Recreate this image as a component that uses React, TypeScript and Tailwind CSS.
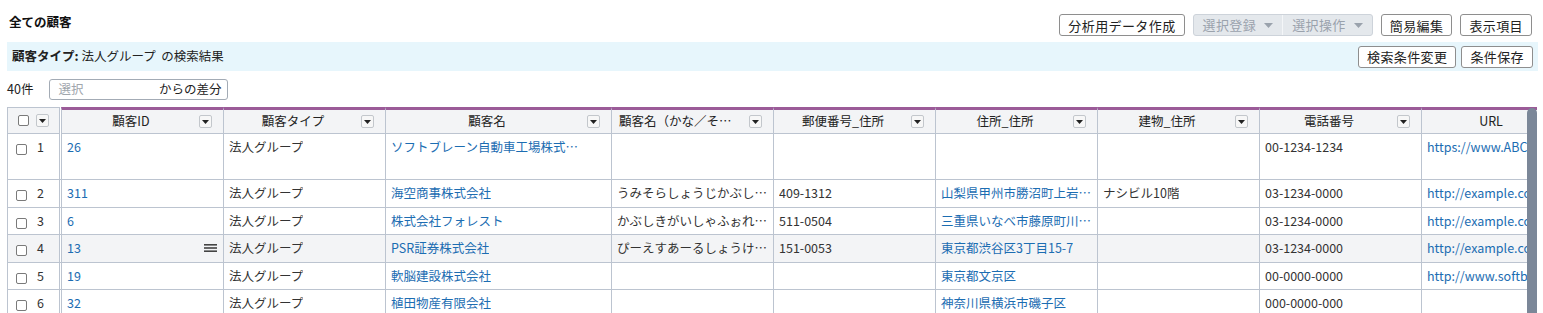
import React from "react";

type Col = {
    key: string;
    label: string;
    width: string;
    link?: boolean;
    extra?: string;
};

type Customer = {
    no: number;
    id: string;
    type: string;
    name: string;
    kana: string;
    zip: string;
    address: string;
    building: string;
    tel: string;
    url: string;
};

const columns: Col[] = [
    { key: "id", label: "顧客ID", width: "w-[162px]", link: true },
    { key: "type", label: "顧客タイプ", width: "w-[162px]" },
    { key: "name", label: "顧客名", width: "w-[226px]", link: true, extra: "pr-[26px]" },
    { key: "kana", label: "顧客名（かな／その他）", width: "w-[162px]" },
    { key: "zip", label: "郵便番号_住所", width: "w-[162px]" },
    { key: "address", label: "住所_住所", width: "w-[162px]", link: true },
    { key: "building", label: "建物_住所", width: "w-[162px]" },
    { key: "tel", label: "電話番号", width: "w-[162px]" },
    { key: "url", label: "URL", width: "w-[162px]", link: true },
];

const customers: Customer[] = [
    {
        no: 1,
        id: "26",
        type: "法人グループ",
        name: "ソフトブレーン自動車工場株式会社 本社営業所",
        kana: "",
        zip: "",
        address: "",
        building: "",
        tel: "00-1234-1234",
        url: "https://www.ABC.co.jp",
    },
    {
        no: 2,
        id: "311",
        type: "法人グループ",
        name: "海空商事株式会社",
        kana: "うみそらしょうじかぶしきがいしゃ",
        zip: "409-1312",
        address: "山梨県甲州市勝沼町上岩崎1234",
        building: "ナシビル10階",
        tel: "03-1234-0000",
        url: "http://example.com",
    },
    {
        no: 3,
        id: "6",
        type: "法人グループ",
        name: "株式会社フォレスト",
        kana: "かぶしきがいしゃふぉれすと",
        zip: "511-0504",
        address: "三重県いなべ市藤原町川合123",
        building: "",
        tel: "03-1234-0000",
        url: "http://example.com",
    },
    {
        no: 4,
        id: "13",
        type: "法人グループ",
        name: "PSR証券株式会社",
        kana: "ぴーえすあーるしょうけんかぶしきがいしゃ",
        zip: "151-0053",
        address: "東京都渋谷区3丁目15-7",
        building: "",
        tel: "03-1234-0000",
        url: "http://example.com",
    },
    {
        no: 5,
        id: "19",
        type: "法人グループ",
        name: "軟脳建設株式会社",
        kana: "",
        zip: "",
        address: "東京都文京区",
        building: "",
        tel: "00-0000-0000",
        url: "http://www.softbrain.co.jp",
    },
    {
        no: 6,
        id: "32",
        type: "法人グループ",
        name: "植田物産有限会社",
        kana: "",
        zip: "",
        address: "神奈川県横浜市磯子区",
        building: "",
        tel: "000-0000-000",
        url: "",
    },
    {
        no: 7,
        id: "41",
        type: "法人グループ",
        name: "株式会社サンプル",
        kana: "",
        zip: "",
        address: "",
        building: "",
        tel: "",
        url: "",
    },
];

const Check = () => (
    <span className="inline-block w-[11px] h-[11px] border border-[#7a7a7a] rounded-[2px] bg-white shrink-0" />
);

const DropBtn = () => (
    <span className="flex items-center justify-center w-[13px] h-[13px] border border-[#c3c7cc] rounded-[2px] bg-[#f7f7f7] shrink-0">
        <svg width="7" height="4" viewBox="0 0 7 4">
            <path d="M0 0h7L3.5 4z" fill="#222" />
        </svg>
    </span>
);

const HamburgerIcon = () => (
    <svg width="13" height="8" viewBox="0 0 13 8" className="shrink-0">
        <rect x="0" y="0" width="13" height="1.6" fill="#444" />
        <rect x="0" y="3.2" width="13" height="1.6" fill="#444" />
        <rect x="0" y="6.4" width="13" height="1.6" fill="#444" />
    </svg>
);

const TopButton = ({ children }: { children: React.ReactNode }) => (
    <button className="h-[22px] px-[8px] border border-[#8e8e8e] rounded-[3px] bg-white text-[13px] tracking-[0.4px] text-[#222] leading-none">
        {children}
    </button>
);

export default function App() {
    return (
        <div className="w-[1543px] h-[313px] overflow-hidden bg-white text-[#333] text-[12.5px] font-['Noto_Sans_CJK_JP','Noto_Sans',sans-serif]">
            {/* タイトル行 */}
            <div className="flex justify-between h-[42px] pl-[9px] pr-[11px]">
                <h1 className="pt-[13px] text-[12.5px] font-bold leading-[18px] text-[#111]">全ての顧客</h1>
                <div className="flex items-start gap-[8px] pt-[14px]">
                    <TopButton>分析用データ作成</TopButton>
                    <div className="flex h-[22px] border border-[#cdd3da] rounded-[3px] bg-[#e4e8ec] text-[13px] tracking-[0.4px] text-[#9aa2ac]">
                        <span className="flex items-center gap-[8px] px-[9px] border-r border-[#f4f6f8]">
                            選択登録
                            <svg width="9" height="5" viewBox="0 0 9 5">
                                <path d="M0 0h9L4.5 5z" fill="#9aa2ac" />
                            </svg>
                        </span>
                        <span className="flex items-center gap-[8px] px-[9px]">
                            選択操作
                            <svg width="9" height="5" viewBox="0 0 9 5">
                                <path d="M0 0h9L4.5 5z" fill="#9aa2ac" />
                            </svg>
                        </span>
                    </div>
                    <TopButton>簡易編集</TopButton>
                    <TopButton>表示項目</TopButton>
                </div>
            </div>

            {/* 検索条件バー */}
            <div className="flex items-center justify-between h-[29px] ml-[7px] mr-[5px] pl-[5px] pr-[5px] bg-[#e7f6fc]">
                <p className="text-[12.5px] text-[#222]">
                    <span className="font-bold">顧客タイプ:</span> 法人グループ &nbsp;の検索結果
                </p>
                <div className="flex gap-[5px]">
                    <TopButton>検索条件変更</TopButton>
                    <TopButton>条件保存</TopButton>
                </div>
            </div>

            {/* 件数と差分 */}
            <div className="flex items-center gap-[16px] mt-[8px] h-[21px] pl-[7px]">
                <span className="text-[12.5px] text-[#222]">40件</span>
                <div className="flex items-center justify-between w-[179px] h-[21px] pl-[8px] pr-[6px] border border-[#a3abb5] rounded-[3px] bg-white">
                    <span className="text-[#a0a6ad]">選択</span>
                    <span className="text-[#222]">からの差分</span>
                </div>
            </div>

            {/* 一覧 */}
            <div className="relative mt-[7px] ml-[7px] w-[1530px] h-[206px] overflow-hidden">
                <div className="w-[1700px]">
                    {/* ヘッダー */}
                    <div className="flex h-[27px] bg-[#f3f4f6]">
                        <div className="flex items-center gap-[7px] w-[53px] pl-[10px] border-l border-r border-t border-b border-[#bcc4d0]">
                            <Check />
                            <DropBtn />
                        </div>
                        <div className="w-[1px] bg-white" />
                        {columns.map((c) => (
                            <div
                                key={c.key}
                                className={`${c.width} flex items-center border-l border-b border-[#bcc4d0] border-t-[3px] border-t-[#9b5b98] shrink-0`}
                            >
                                <span
                                    className={`flex-1 min-w-0 truncate pl-[7px] pr-[6px] text-[#222] ${c.key === "kana" ? "text-left" : "text-center"}`}
                                >
                                    {c.label}
                                </span>
                                <span className="mr-[11px]">
                                    <DropBtn />
                                </span>
                            </div>
                        ))}
                    </div>

                    {/* 行 */}
                    {customers.map((r, i) => {
                        const hovered = r.no === 4;
                        const rowH = i === 0 ? "h-[46px]" : "h-[27.5px]";
                        return (
                            <div key={r.no} className={`flex ${rowH} ${hovered ? "bg-[#f3f4f6]" : "bg-white"}`}>
                                <div className="flex items-start gap-[10px] w-[53px] pl-[8px] pt-[4px] border-l border-r border-b border-[#bcc4d0]">
                                    <span className="mt-[3px]">
                                        <Check />
                                    </span>
                                    <span className="leading-[17px]">{r.no}</span>
                                </div>
                                <div className="w-[1px] border-b border-[#bcc4d0] bg-white" />
                                {columns.map((c) => {
                                    const value = r[c.key as keyof Customer] as string;
                                    return (
                                        <div
                                            key={c.key}
                                            className={`${c.width} flex items-start justify-between shrink-0 pl-[5px] pr-[2px] pt-[4px] border-l border-b border-[#bcc4d0] ${c.extra ?? ""}`}
                                        >
                                            <span
                                                className={`min-w-0 truncate leading-[17px] ${c.link ? "text-[#1c6db2]" : "text-[#333]"}`}
                                            >
                                                {value}
                                            </span>
                                            {hovered && c.key === "id" && (
                                                <span className="mt-[5px] mr-[4px]">
                                                    <HamburgerIcon />
                                                </span>
                                            )}
                                        </div>
                                    );
                                })}
                            </div>
                        );
                    })}
                </div>

                {/* スクロールバー */}
                <div className="absolute right-0 top-[1px] bottom-0 w-[10px] rounded-t-[5px] bg-[#7b8798]" />
            </div>
        </div>
    );
}
